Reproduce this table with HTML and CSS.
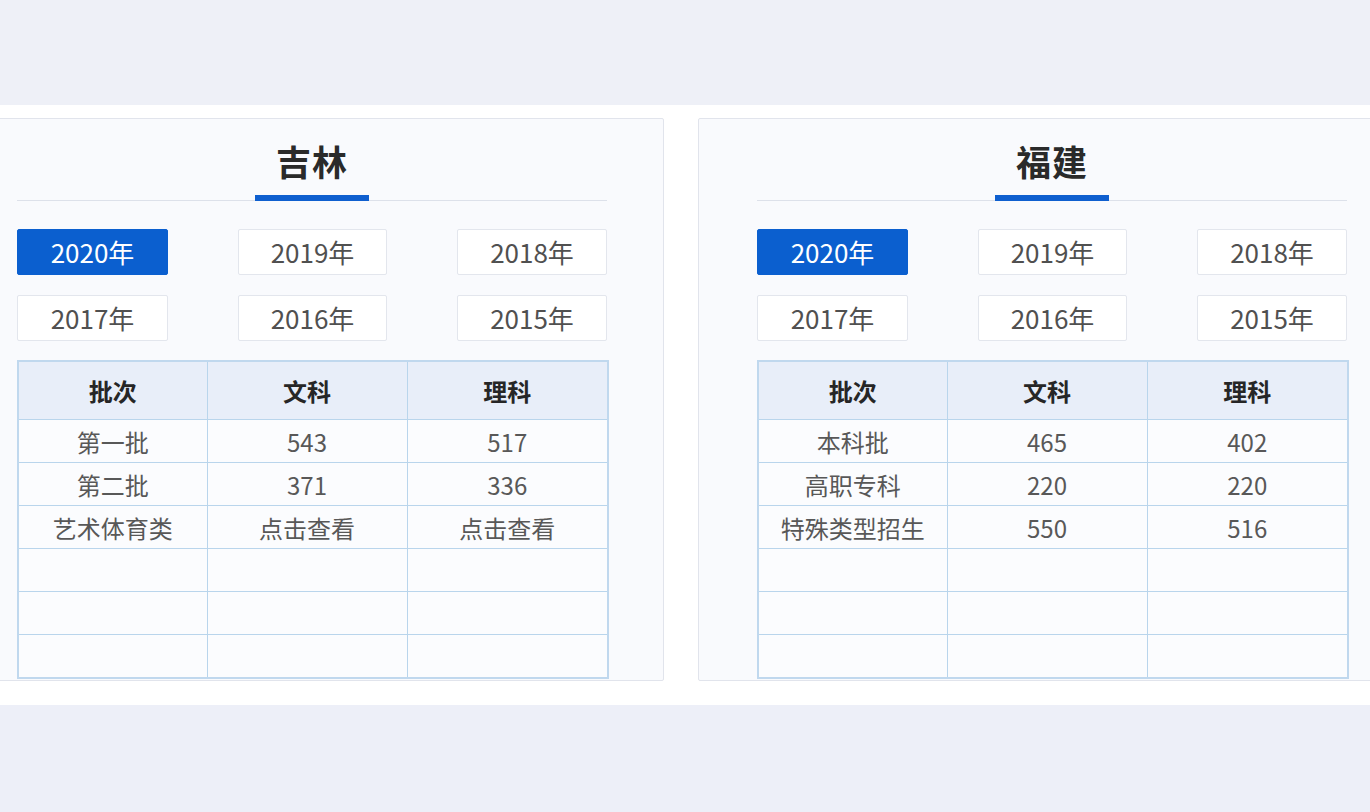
FILE: index.html
```html
<!DOCTYPE html>
<html lang="zh-CN">
<head>
<meta charset="utf-8">
<title>分数线</title>
<link rel="stylesheet" href="styles.css">
</head>
<body>
<div class="topband"></div>
<div class="strip">
  <div class="panels">
    <section class="panel">
      <div class="title-wrap"><span class="title">吉林</span></div>
      <div class="years">
        <div class="year active">2020年</div>
        <div class="year">2019年</div>
        <div class="year">2018年</div>
        <div class="year">2017年</div>
        <div class="year">2016年</div>
        <div class="year">2015年</div>
      </div>
      <table class="scores">
        <colgroup><col class="c1"><col class="c2"><col class="c3"></colgroup>
        <thead><tr><th>批次</th><th>文科</th><th>理科</th></tr></thead>
        <tbody>
          <tr><td>第一批</td><td>543</td><td>517</td></tr>
          <tr><td>第二批</td><td>371</td><td>336</td></tr>
          <tr><td>艺术体育类</td><td>点击查看</td><td>点击查看</td></tr>
          <tr><td></td><td></td><td></td></tr>
          <tr><td></td><td></td><td></td></tr>
          <tr><td></td><td></td><td></td></tr>
        </tbody>
      </table>
    </section>
    <section class="panel">
      <div class="title-wrap"><span class="title">福建</span></div>
      <div class="years">
        <div class="year active">2020年</div>
        <div class="year">2019年</div>
        <div class="year">2018年</div>
        <div class="year">2017年</div>
        <div class="year">2016年</div>
        <div class="year">2015年</div>
      </div>
      <table class="scores">
        <colgroup><col class="c1"><col class="c2"><col class="c3"></colgroup>
        <thead><tr><th>批次</th><th>文科</th><th>理科</th></tr></thead>
        <tbody>
          <tr><td>本科批</td><td>465</td><td>402</td></tr>
          <tr><td>高职专科</td><td>220</td><td>220</td></tr>
          <tr><td>特殊类型招生</td><td>550</td><td>516</td></tr>
          <tr><td></td><td></td><td></td></tr>
          <tr><td></td><td></td><td></td></tr>
          <tr><td></td><td></td><td></td></tr>
        </tbody>
      </table>
    </section>
  </div>
</div>
<div class="bottomband"></div>
</body>
</html>
```
FILE: styles.css
```css
html, body {
  margin: 0;
  padding: 0;
}
body {
  background: #edeff7;
  font-family: "Noto Sans CJK SC", "Noto Sans", sans-serif;
  color: #444;
  overflow: hidden;
  width: 1370px;
  height: 812px;
}
.topband {
  height: 105px;
  background: #eef0f7;
}
.strip {
  background: #ffffff;
  padding: 13px 0 24px;
  overflow: hidden;
}
.panels {
  display: flex;
  gap: 34px;
  margin-left: -42px;
}
.panel {
  flex: 0 0 auto;
  width: 590px;
  padding: 0 56px 1px 58px;
  background: #f9fafd;
  border: 1px solid #e1e4ec;
  border-radius: 2px;
}
.title-wrap {
  border-bottom: 1px solid #dde1ea;
  height: 82px;
  box-sizing: border-box;
  display: flex;
  justify-content: center;
  align-items: flex-end;
}
.title {
  display: block;
  width: 114px;
  text-align: center;
  font-size: 35px;
  line-height: 40px;
  font-weight: 700;
  color: #2a2a2a;
  padding-bottom: 14px;
  border-bottom: 6px solid #0f5fcf;
  margin-bottom: -1px;
  letter-spacing: 1px;
}
.years {
  display: grid;
  grid-template-columns: 151px 149px 150px;
  justify-content: space-between;
  row-gap: 20px;
  margin-top: 28px;
}
.year {
  height: 46px;
  box-sizing: border-box;
  border: 1px solid #e3e6ed;
  background: #ffffff;
  border-radius: 2px;
  font-size: 26px;
  line-height: 44px;
  text-align: center;
  color: #505050;
}
.year.active {
  background: #0b5fcf;
  border-color: #0b5fcf;
  color: #ffffff;
}
.scores {
  margin-top: 19px;
  width: 590px;
  border-collapse: collapse;
  table-layout: fixed;
  border: 2px solid #c0d8ee;
  background: #fbfcfe;
}
.c1 { width: 189px; }
.c2 { width: 200px; }
.c3 { width: 201px; }
.scores th,
.scores td {
  border: 1px solid #b9d5ec;
  text-align: center;
  padding: 0;
  font-size: 24px;
  white-space: nowrap;
}
.scores th {
  height: 57px;
  background: #e8eef9;
  font-weight: 700;
  color: #262626;
}
.scores td {
  height: 42px;
  color: #585858;
}
.bottomband {
  height: 107px;
  background: #edeff8;
}
```
